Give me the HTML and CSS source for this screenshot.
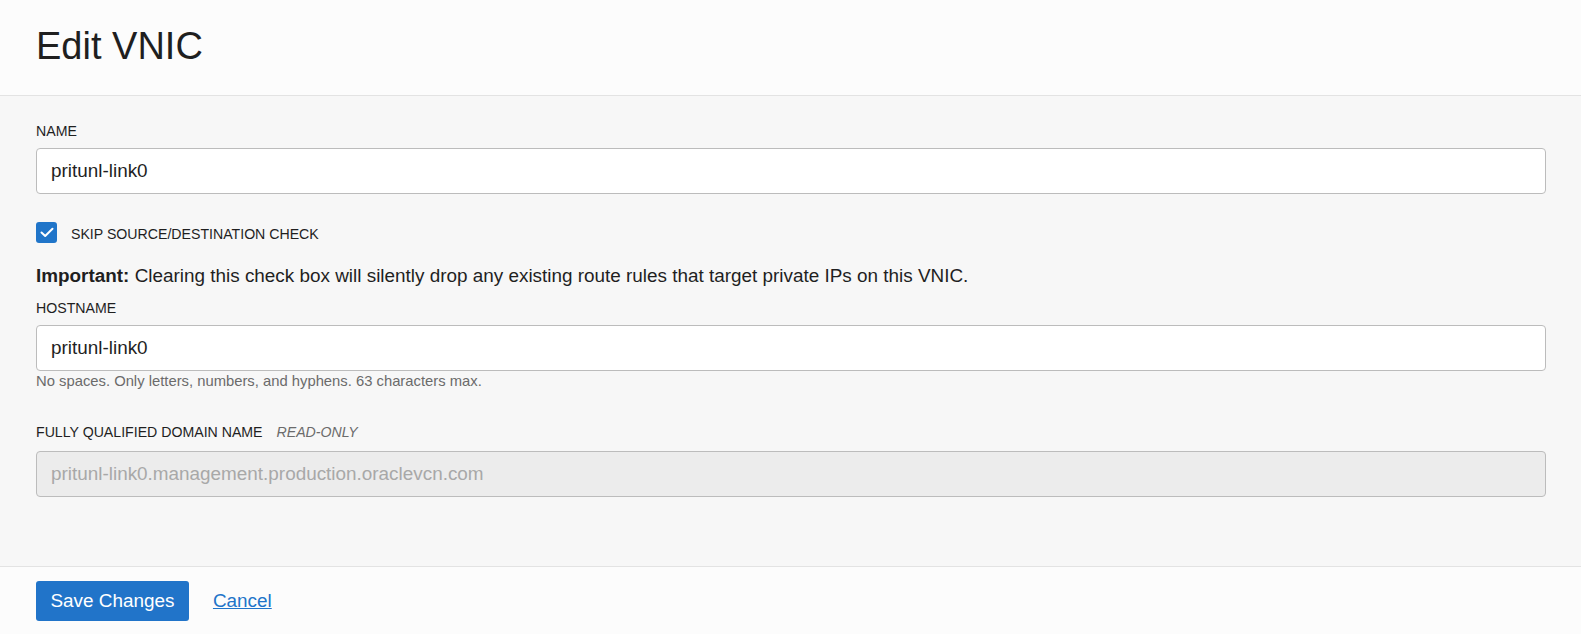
FILE: index.html
```html
<!DOCTYPE html>
<html lang="en">
<head>
<meta charset="utf-8">
<title>Edit VNIC</title>
<link rel="stylesheet" href="styles.css">
</head>
<body>
<div class="panel">
  <header class="panel-header">
    <h1 class="title">Edit VNIC</h1>
  </header>
  <main class="panel-body">
    <div class="field">
      <label class="label" for="name">NAME</label>
      <input class="input" id="name" type="text" value="pritunl-link0">
    </div>
    <div class="check-row">
      <span class="checkbox">
        <svg width="14" height="11" viewBox="0 0 14 11" aria-hidden="true"><path d="M1.5 5.5 L5.2 9 L12.5 1.8" fill="none" stroke="#fff" stroke-width="2" stroke-linecap="round" stroke-linejoin="round"/></svg>
      </span>
      <span class="check-label">SKIP SOURCE/DESTINATION CHECK</span>
    </div>
    <p class="note"><strong>Important:</strong> Clearing this check box will silently drop any existing route rules that target private IPs on this VNIC.</p>
    <div class="field">
      <label class="label" for="host">HOSTNAME</label>
      <input class="input" id="host" type="text" value="pritunl-link0">
      <div class="help">No spaces. Only letters, numbers, and hyphens. 63 characters max.</div>
    </div>
    <div class="field field-fqdn">
      <div class="label label-fqdn">FULLY QUALIFIED DOMAIN NAME <span class="readonly">READ-ONLY</span></div>
      <div class="input input-disabled">pritunl-link0.management.production.oraclevcn.com</div>
    </div>
  </main>
  <footer class="panel-footer">
    <button class="btn-primary" type="button">Save Changes</button>
    <a class="link" href="#">Cancel</a>
  </footer>
</div>
</body>
</html>
```
FILE: styles.css
```css
* { box-sizing: border-box; }
html, body { margin: 0; padding: 0; height: 100%; }
body {
  font-family: "Liberation Sans", Arial, sans-serif;
  color: #161513;
  background: #f7f7f7;
}
.panel {
  display: flex;
  flex-direction: column;
  height: 634px;
}
.panel-header {
  height: 96px;
  background: #fcfcfc;
  border-bottom: 1px solid #e3e3e3;
  padding: 24px 36px 0;
}
.title {
  margin: 0;
  font-size: 38px;
  font-weight: 400;
  line-height: 44px;
  color: #1f1f1f;
}
.panel-body {
  flex: 1;
  padding: 27px 35px 0 36px;
  background: #f7f7f7;
}
.field { display: flex; flex-direction: column; }
.label {
  font-size: 14.15px;
  line-height: 16px;
  color: #1f1f1f;
  margin-bottom: 9px;
}
.label-fqdn { margin-bottom: 11px; }
.readonly {
  font-style: italic;
  color: #6b6b6b;
  margin-left: 10px;
}
.input {
  height: 46px;
  width: 100%;
  border: 1px solid #bcbcbc;
  border-radius: 4px;
  background: #fff;
  padding: 0 14px;
  font-family: "Liberation Sans", Arial, sans-serif;
  font-size: 18.9px;
  color: #1f1f1f;
  outline: none;
}
.input-disabled {
  display: flex;
  align-items: center;
  background: #ececec;
  color: #a8a8a8;
}
.check-row {
  display: flex;
  align-items: center;
  margin-top: 28px;
  height: 20px;
}
.checkbox {
  width: 21px;
  height: 21px;
  border-radius: 3px;
  background: #2075c9;
  display: flex;
  align-items: center;
  justify-content: center;
}
.check-label {
  margin-left: 14px;
  font-size: 14.15px;
  color: #1f1f1f;
  padding-top: 3px;
}
.note {
  margin: 22px 0 12px;
  font-size: 18.9px;
  line-height: 24px;
  color: #1f1f1f;
}
.note strong { font-weight: 700; }
.help {
  margin-top: 1px;
  font-size: 14.8px;
  line-height: 18px;
  color: #6b6b6b;
}
.field-fqdn { margin-top: 34px; }
.panel-footer {
  height: 68px;
  background: #fcfcfc;
  border-top: 1px solid #e3e3e3;
  display: flex;
  align-items: center;
  padding: 0 36px;
  gap: 24px;
}
.btn-primary {
  height: 40px;
  padding: 0 14.5px;
  border: none;
  border-radius: 3px;
  background: #2174c9;
  color: #fff;
  font-family: "Liberation Sans", Arial, sans-serif;
  font-size: 18.9px;
}
.link {
  font-size: 18.9px;
  color: #2174c9;
  text-decoration: underline;
}
```
